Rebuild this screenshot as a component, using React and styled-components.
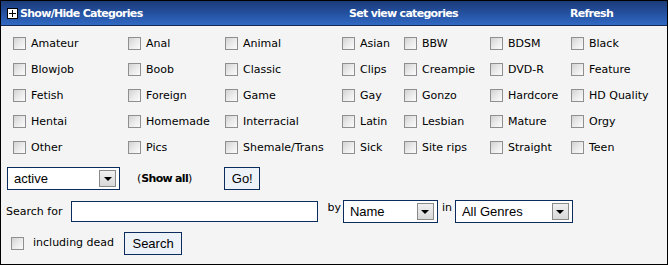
import React from "react";
import styled, { createGlobalStyle } from "styled-components";

const Global = createGlobalStyle`
  html, body { margin: 0; padding: 0; background: #fff; }
  body { font-family: "DejaVu Sans", Verdana, sans-serif; font-size: 11px; color: #000; }
  * { box-sizing: border-box; }
`;

const Panel = styled.div`
  width: 668px;
  height: 265px;
  border: 1px solid #000;
  background: #f4f4f4;
  display: flex;
  flex-direction: column;
`;

const Header = styled.div`
  height: 25px;
  background: linear-gradient(to bottom, #1c3b78 0%, #24509f 50%, #3169c4 100%);
  border-bottom: 1px solid #142a55;
  display: grid;
  grid-template-columns: 342px 221px 1fr;
  align-items: center;
  padding-left: 6px;
  color: #fff;
  font-weight: bold;
  font-size: 11px;
  letter-spacing: -0.7px;
`;

const HeadItem = styled.div`
  display: flex;
  align-items: center;
  gap: 2px;
  white-space: nowrap;
`;

const PlusBox = styled.span`
  width: 11px;
  height: 11px;
  background: #fff;
  border: 1px solid #000;
  position: relative;
  display: inline-block;
  flex: none;
  &::before, &::after {
    content: "";
    position: absolute;
    background: #000;
  }
  &::before { left: 1px; right: 1px; top: 4px; height: 1px; }
  &::after { top: 1px; bottom: 1px; left: 4px; width: 1px; }
`;

const Grid = styled.div`
  display: grid;
  grid-template-columns: 115px 97px 117px 62px 86px 81px 1fr;
  grid-auto-rows: 26px;
  padding: 4px 0 0 12px;
`;

const Cell = styled.label`
  display: flex;
  align-items: center;
  gap: 5px;
  white-space: nowrap;
`;

const Box = styled.span`
  width: 13px;
  height: 13px;
  border: 1px solid #8f8f8f;
  background: linear-gradient(135deg, #d2d2d2 0%, #ececec 55%, #fbfbfb 100%);
  display: inline-block;
  flex: none;
`;

const Row = styled.div`
  display: flex;
  align-items: center;
  padding-left: ${(p) => p.$pl || 0}px;
  margin-top: ${(p) => p.$mt || 0}px;
  height: ${(p) => p.$h}px;
`;

const Select = styled.div`
  width: ${(p) => p.$w}px;
  height: ${(p) => p.$h || 23}px;
  border: 1px solid #0d2c5e;
  background: #fff;
  display: flex;
  align-items: center;
  justify-content: space-between;
  padding: 0 3px 0 6px;
  font-family: "Liberation Sans", Arial, sans-serif;
  font-size: 13px;
  flex: none;
`;

const ArrowBtn = styled.span`
  width: 17px;
  height: 17px;
  border: 1px solid #8a8a8a;
  background: linear-gradient(to bottom, #f0f0f0, #d8d8d8);
  display: flex;
  align-items: center;
  justify-content: center;
  &::after {
    content: "";
    border-left: 4px solid transparent;
    border-right: 4px solid transparent;
    border-top: 4px solid #000;
    margin-top: 1px;
  }
`;

const Text = styled.span`
  margin-left: ${(p) => p.$ml || 0}px;
  margin-top: ${(p) => p.$mt || 0}px;
  white-space: nowrap;
  align-self: ${(p) => p.$self || "center"};
`;

const Bold = styled.b`
  letter-spacing: -0.7px;
`;

const Button = styled.button`
  margin-left: ${(p) => p.$ml || 0}px;
  width: ${(p) => p.$w}px;
  height: 23px;
  border: 1px solid #0d2c5e;
  background: #edf2f9;
  font-family: "Liberation Sans", Arial, sans-serif;
  font-size: 13px;
  color: #000;
  padding: 0;
  cursor: pointer;
`;

const Input = styled.div`
  margin-left: ${(p) => p.$ml || 0}px;
  width: ${(p) => p.$w}px;
  height: 21px;
  border: 1px solid #0d2c5e;
  background: #fff;
  flex: none;
`;

const Spacer = styled.span`
  margin-left: ${(p) => p.$ml}px;
  display: inline-flex;
`;

const cats = [
  ["Amateur", "Anal", "Animal", "Asian", "BBW", "BDSM", "Black"],
  ["Blowjob", "Boob", "Classic", "Clips", "Creampie", "DVD-R", "Feature"],
  ["Fetish", "Foreign", "Game", "Gay", "Gonzo", "Hardcore", "HD Quality"],
  ["Hentai", "Homemade", "Interracial", "Latin", "Lesbian", "Mature", "Orgy"],
  ["Other", "Pics", "Shemale/Trans", "Sick", "Site rips", "Straight", "Teen"],
];

export default function App() {
  return (
    <>
      <Global />
      <Panel>
        <Header>
          <HeadItem>
            <PlusBox />
            Show/Hide Categories
          </HeadItem>
          <HeadItem>Set view categories</HeadItem>
          <HeadItem>Refresh</HeadItem>
        </Header>
        <Grid>
          {cats.flat().map((c) => (
            <Cell key={c}>
              <Box />
              {c}
            </Cell>
          ))}
        </Grid>
        <Row $pl={6} $mt={7} $h={23}>
          <Select $w={113}>
            active
            <ArrowBtn />
          </Select>
          <Text $ml={17}>
            (<Bold>Show all</Bold>)
          </Text>
          <Button $ml={32} $w={36}>Go!</Button>
        </Row>
        <Row $pl={5} $mt={10} $h={23}>
          <Text>Search for</Text>
          <Input $ml={9} $w={247} />
          <Text $ml={9} $self="flex-start" $mt={1}>by</Text>
          <Spacer $ml={2}>
            <Select $w={95}>
              Name
              <ArrowBtn />
            </Select>
          </Spacer>
          <Text $ml={4} $self="flex-start" $mt={1}>in</Text>
          <Spacer $ml={3}>
            <Select $w={118}>
              All Genres
              <ArrowBtn />
            </Select>
          </Spacer>
        </Row>
        <Row $pl={10} $mt={9} $h={23}>
          <Box />
          <Text $ml={9} $mt={-2}>including dead</Text>
          <Button $ml={10} $w={58}>Search</Button>
        </Row>
      </Panel>
    </>
  );
}
